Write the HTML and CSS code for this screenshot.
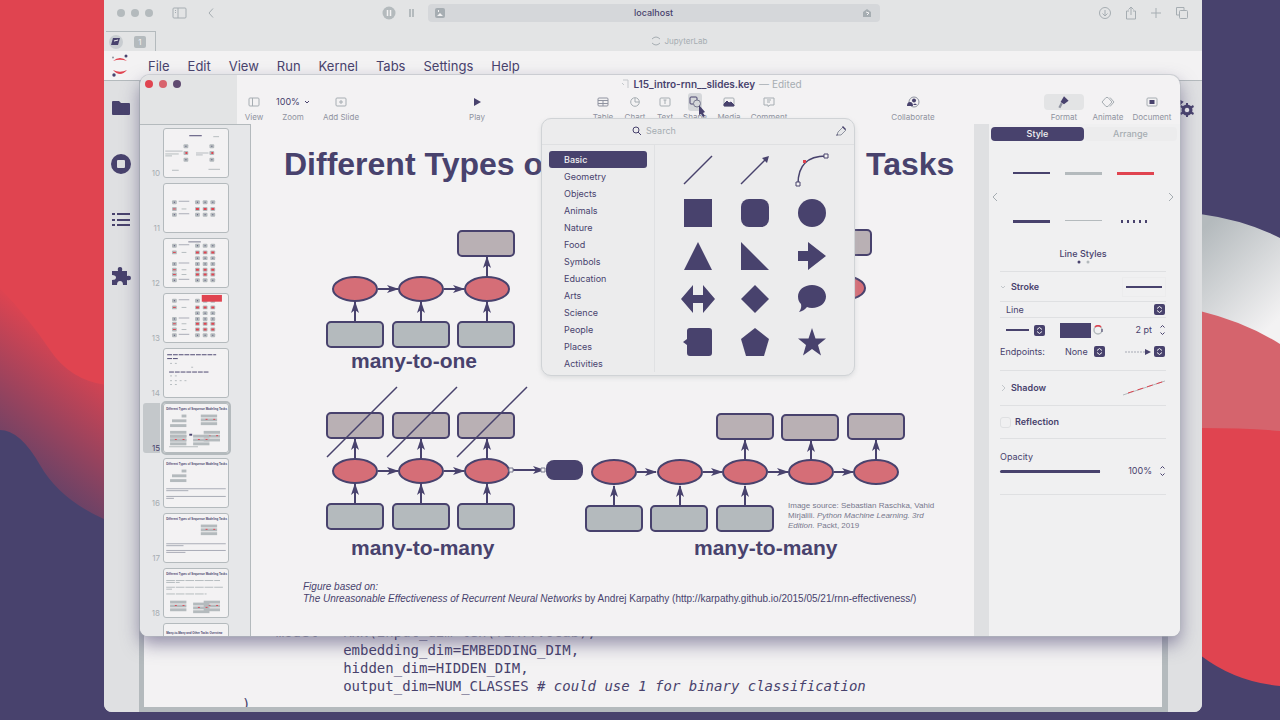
FILE: index.html
```html
<!DOCTYPE html>
<html lang="en">
<head>
<meta charset="utf-8">
<title>L15_intro-rnn__slides.key</title>
<link rel="stylesheet" href="styles.css">
</head>
<body>
<svg class="wallpaper" viewBox="0 0 1280 720" preserveAspectRatio="none" aria-hidden="true">
  <defs>
    <linearGradient id="fade" x1="0.35" y1="0" x2="0" y2="1"><stop offset="0.1" stop-color="#e04450"/><stop offset="0.9" stop-color="#48426d"/></linearGradient>
    <linearGradient id="silver" x1="0" y1="0" x2="0.6" y2="1"><stop offset="0.1" stop-color="#b4babd"/><stop offset="1" stop-color="#f3f2f3"/></linearGradient>
  </defs>
  <rect width="1280" height="720" fill="#48426d"/>
  <path d="M0 0H106V400Q70 390 46 350T0 290Z" fill="#e04450"/>
  <path d="M0 288Q30 320 50 350T106 385V520Q60 500 40 465T0 430Z" fill="url(#fade)"/>
  <path d="M1200 214Q1245 220 1280 238V350H1200Z" fill="url(#silver)"/>
  <path d="M1200 311Q1245 322 1280 344V440H1200Z" fill="#d5646d"/>
  <path d="M1200 428Q1245 428 1280 431V686Q1235 682 1200 655Z" fill="#e04450"/>
</svg>

<div class="browser">
  <div class="browser-bar">
    <div class="group nav">
      <span class="dots"><i></i><i></i><i></i></span>
      <svg width="16" height="12" viewBox="0 0 16 12" class="ln"><rect x="1" y="1" width="13" height="10" rx="1"/><path d="M6 1V11M3 3.500H4M3 5.500H4"/></svg>
      <svg width="8" height="12" viewBox="0 0 8 12" class="ln"><path d="M6 1.500L2 6L6 10.500"/></svg>
    </div>
    <div class="group address">
      <svg width="14" height="14" viewBox="0 0 14 14"><circle cx="7" cy="7" r="6.500" fill="#b4babd"/><path d="M5.500 4V10M8.500 4V10" stroke="#f3f2f3" stroke-width="1.500"/></svg>
      <svg width="8" height="10" viewBox="0 0 8 10"><path d="M2 1V9M5 1V9" stroke="#b4babd" stroke-width="2"/></svg>
      <div class="url">
        <svg width="10" height="10" viewBox="0 0 10 10"><rect width="10" height="10" rx="2" fill="#a6adb2"/><path d="M2 8L5 5L8 8ZM3 2H4V4H3Z" fill="#f3f2f3"/></svg>
        <span>localhost</span>
        <svg width="10" height="10" viewBox="0 0 10 10"><path d="M1 9V4L5 1L9 4V9Z" fill="#a6adb2"/><path d="M4 4L7 5L5 7" stroke="#f3f2f3" fill="none"/></svg>
      </div>
    </div>
    <div class="group tools">
      <svg width="14" height="14" viewBox="0 0 14 14" class="ln"><circle cx="7" cy="7" r="5.500"/><path d="M7 4V10M4.500 7.500L7 10L9.500 7.500"/></svg>
      <svg width="12" height="14" viewBox="0 0 12 14" class="ln"><path d="M4 5H1.500V13H10.500V5H8M6 9V1M3.500 3.500L6 1L8.500 3.500"/></svg>
      <svg width="12" height="12" viewBox="0 0 12 12" class="ln"><path d="M6 1V11M1 6H11"/></svg>
      <svg width="14" height="14" viewBox="0 0 14 14" class="ln"><path d="M4 9H1.500V1.500H9V4"/><rect x="4.500" y="4.500" width="8" height="8" rx="1"/></svg>
    </div>
  </div>
  <div class="tab-row">
    <div class="pinned">
      <svg width="18" height="16" viewBox="0 0 18 16"><circle cx="8" cy="8" r="7" fill="#c8ccd0"/><path d="M5 4H12L10 11H3Z" fill="#48426d"/><path d="M6 7L10 6" stroke="#f3f2f3"/></svg>
      <span>1</span>
    </div>
    <div class="tab">
      <svg width="10" height="10" viewBox="0 0 10 10" class="ln"><path d="M1 3Q5 -1 9 3M1 7Q5 11 9 7"/></svg>
      JupyterLab
    </div>
  </div>
  <nav class="menubar">
    <svg width="20" height="24" viewBox="0 0 20 24"><path d="M3 7Q10 1 17 7Q10 4.500 3 7ZM3 16Q10 24 17 16Q10 19.500 3 16Z" fill="#e04450"/><circle cx="16" cy="2" r="1.500" fill="#48426d"/><circle cx="3" cy="3.500" r="1" fill="#8f93a0"/><circle cx="4" cy="21" r="1.700" fill="#48426d"/></svg>
    <a href="#file">File</a><a href="#edit">Edit</a><a href="#view">View</a><a href="#run">Run</a><a href="#kernel">Kernel</a><a href="#tabs">Tabs</a><a href="#settings">Settings</a><a href="#help">Help</a>
  </nav>
  <div class="lab">
    <div class="lab-side">
      <svg width="20" height="20" viewBox="0 0 20 20"><path d="M1 4Q1 3 2 3H8L10 5H18Q19 5 19 6V16Q19 17 18 17H2Q1 17 1 16Z"/></svg>
      <svg width="20" height="20" viewBox="0 0 20 20"><path fill-rule="evenodd" d="M10 0A10 10 0 1 0 10 20A10 10 0 1 0 10 0ZM7 6H13Q14 6 14 7V13Q14 14 13 14H7Q6 14 6 13V7Q6 6 7 6Z"/></svg>
      <svg width="18" height="20" viewBox="0 0 18 20"><path d="M0 3H3V5H0ZM5 3H18V5H5ZM0 9H3V11H0ZM5 9H18V11H5ZM0 14H3V16H0ZM5 14H18V16H5Z"/></svg>
      <svg width="20" height="20" viewBox="0 0 20 20"><path d="M1 5H7Q6 1 9 1T11 5H16V10Q20 9 20 12T16 14V19H12Q12 15 9 15T6 19H1V14Q5 14 5 11.500T1 9Z"/></svg>
    </div>
    <pre class="code">    model = RNN(input_dim=len(TEXT.vocab),
            embedding_dim=EMBEDDING_DIM,
            hidden_dim=HIDDEN_DIM,
            output_dim=NUM_CLASSES <em># could use 1 for binary classification</em>
)</pre>
    <div class="lab-side right">
      <svg width="18" height="20" viewBox="0 0 18 20"><circle cx="10" cy="12" r="4" fill="none" stroke="#48426d" stroke-width="3"/><path d="M9 5H11V19H9ZM3 9L4 7L17 15L16 17ZM3 15L4 17L17 9L16 7Z"/><circle cx="10" cy="12" r="2.200" fill="#f3f2f3"/><path d="M1 2L5 4L2 7" fill="none" stroke="#48426d" stroke-width="2"/></svg>
    </div>
  </div>
</div>

<main class="keynote">
  <header class="kn-head">
    <div class="lights"><i></i><i></i><i></i></div>
    <div class="kn-top">
      <div class="kn-title"><svg width="8" height="10" viewBox="0 0 8 10" class="ln faint"><path d="M2 1H7V9M1 4L3 6"/></svg><b>L15_intro-rnn__slides.key</b><span>— Edited</span></div>
      <div class="toolbar">
        <div class="set">
          <button class="w34"><svg width="12" height="10" viewBox="0 0 12 10" class="ln"><rect x="1" y="1" width="10" height="8" rx="1"/><path d="M4.500 1V9"/></svg>View</button>
          <button class="w44"><span class="zoom">100% <svg width="6" height="4" viewBox="0 0 6 4"><path d="M1 1L3 3L5 1" fill="none" stroke="#48426d"/></svg></span>Zoom</button>
          <button class="w52"><svg width="12" height="10" viewBox="0 0 12 10" class="ln"><rect x="1" y="1" width="10" height="8" rx="1"/><path d="M6 3V7M4 5H8"/></svg>Add Slide</button>
        </div>
        <div class="set"><button class="w36"><svg width="8" height="10" viewBox="1 0 8 10"><path d="M2 1L9 5L2 9Z" fill="#48426d"/></svg>Play</button></div>
        <div class="set">
          <button class="w32"><svg width="12" height="10" viewBox="0 0 12 10" class="ln dk"><rect x="1" y="1" width="10" height="8" rx="1"/><path d="M1 3.500H11M1 6.500H11M6 3V9"/></svg>Table</button>
          <button class="w32"><svg width="12" height="10" viewBox="0 0 12 10" class="ln"><circle cx="6" cy="5" r="4.300"/><path d="M6 1V5H10"/></svg>Chart</button>
          <button class="w28"><svg width="12" height="10" viewBox="0 0 12 10" class="ln"><rect x="1" y="1" width="10" height="8" rx="1"/><path d="M4.500 3H7.500M6 3V7"/></svg>Text</button>
          <button class="w32 lit"><svg width="14" height="12" viewBox="0 0 14 12"><rect x="2" y="1" width="7" height="7" rx="1" fill="none" stroke="#48426d"/><circle cx="9" cy="7.500" r="3.500" fill="#d5d7da" stroke="#77788d"/></svg>Shape</button>
          <button class="w36"><svg width="12" height="10" viewBox="0 0 12 10" class="ln"><rect x="1" y="1" width="10" height="8" rx="1"/><path d="M1 9V7L4 4L6 6L8 5L11 8V9Z" fill="#48426d" stroke="#48426d"/></svg>Media</button>
          <button class="w44"><svg width="12" height="10" viewBox="0 0 12 10" class="ln"><path d="M1 1H11V8H7L5 9.500V8H1ZM4 3H8M4 5H7"/></svg>Comment</button>
        </div>
        <div class="set"><button class="w60"><svg width="14" height="12" viewBox="0 0 14 12"><circle cx="8" cy="6" r="5" fill="none" stroke="#8f93a0"/><circle cx="8" cy="4.500" r="2" fill="#48426d"/><path d="M1 10Q1 6 4 6T7 10ZM7 9Q9 6 11 9Z" fill="#48426d"/></svg>Collaborate</button></div>
        <div class="set">
          <button class="w44 on"><svg width="12" height="12" viewBox="-1 -1 14 14"><path d="M6 1L10 5L6 8L3 6Z" fill="#48426d"/><path d="M4 7L2 11" stroke="#8f93a0" stroke-width="2"/></svg>Format</button>
          <button class="w44"><svg width="14" height="12" viewBox="0 0 14 12" class="ln"><path d="M5 1.500H7L11 6L7 10.500H5L1 6ZM9 1.500L13 6L9 10.500"/></svg>Animate</button>
          <button class="w44"><svg width="12" height="10" viewBox="0 0 12 10" class="ln"><rect x="1" y="1" width="10" height="8" rx="1"/><rect x="4" y="3.500" width="4" height="3" fill="#48426d" stroke="#48426d"/></svg>Document</button>
        </div>
      </div>
    </div>
  </header>

  <div class="kn-body">
    <svg width="0" height="0" class="defs" aria-hidden="true">
      <defs>
        <g id="g3"><rect width="5" height="4" rx="1" fill="#b4babd"/><rect x="8" width="5" height="4" rx="1" fill="#b4babd"/><rect x="16" width="5" height="4" rx="1" fill="#b4babd"/><path d="M2 2H3M10 2H11M18 2H19" stroke="#48426d"/></g>
        <g id="r3"><rect width="5" height="4" rx="1" fill="#b4babd"/><rect x="8" width="5" height="4" rx="1" fill="#b4babd"/><rect x="16" width="5" height="4" rx="1" fill="#b4babd"/><path d="M1 2H4M9 2H12M17 2H20" stroke="#e04450" stroke-width="2"/></g>
        <g id="gl"><rect width="5" height="4" rx="1" fill="#b4babd"/><path d="M7 1H18" stroke="#a6a9b4"/><path d="M2 2H3" stroke="#48426d"/></g>
        <g id="rl"><rect width="5" height="4" rx="1" fill="#b4babd"/><path d="M10 2H15" stroke="#b4babd"/><path d="M1 2H4" stroke="#e04450"/></g>
        <g id="many"><rect width="17" height="3" y="10"/><rect x="2" y="5" width="15" height="3"/><rect x="12" width="5" height="3"/></g>
        <g id="full"><rect width="17" height="3"/><rect y="4" width="17" height="3"/><rect y="8" width="17" height="3"/><path d="M5 5H7M13 5H15" stroke="#e04450"/></g>
      </defs>
    </svg>
    <ol class="slides" start="10">
      <li><span>10</span><svg viewBox="0 0 66 50"><path d="M26 7H39" stroke="#48426d"/><path d="M51 8H57M8 43H15M46 42H58" stroke="#b4babd"/><path d="M1 23H19M1 26H15M1 28H8M33 25H46M33 27H40" stroke="#b4babd"/><g fill="#b4babd"><rect x="20" y="16" width="5" height="4" rx="1"/><rect x="20" y="23" width="5" height="4" rx="1"/><rect x="20" y="30" width="5" height="4" rx="1"/><rect x="47" y="16" width="5" height="4" rx="1"/><rect x="47" y="23" width="5" height="4" rx="1"/><rect x="47" y="30" width="5" height="4" rx="1"/></g><path d="M22 25H24M49 25H51" stroke="#e04450" stroke-width="2"/><path d="M22 18H23M22 32H23M49 18H50M49 32H50" stroke="#48426d"/></svg></li>
      <li><span>11</span><svg viewBox="0 0 66 50"><use href="#gl" x="8" y="17"/><use href="#g3" x="32" y="17"/><use href="#rl" x="8" y="24"/><use href="#r3" x="32" y="24"/><use href="#gl" x="8" y="30"/><use href="#g3" x="32" y="30"/></svg></li>
      <li><span>12</span><svg viewBox="0 0 66 50"><path d="M25 3H38" stroke="#77788d"/><use href="#gl" x="8" y="5"/><use href="#g3" x="32" y="5"/><use href="#rl" x="8" y="12"/><use href="#r3" x="32" y="12"/><use href="#g3" x="32" y="18"/><use href="#gl" x="8" y="24"/><use href="#g3" x="32" y="24"/><use href="#rl" x="8" y="30"/><use href="#r3" x="32" y="30"/><use href="#rl" x="8" y="35"/><use href="#r3" x="32" y="35"/><use href="#gl" x="8" y="41"/><use href="#g3" x="32" y="41"/></svg></li>
      <li><span>13</span><svg viewBox="0 0 66 50"><use href="#gl" x="8" y="5"/><use href="#g3" x="32" y="5"/><rect x="39" y="1" width="21" height="7" fill="#e04450"/><use href="#rl" x="8" y="12"/><use href="#r3" x="32" y="12"/><use href="#g3" x="32" y="18"/><use href="#gl" x="8" y="24"/><use href="#g3" x="32" y="24"/><use href="#rl" x="8" y="29"/><use href="#r3" x="32" y="29"/><use href="#rl" x="8" y="35"/><use href="#r3" x="32" y="35"/><use href="#gl" x="8" y="41"/><use href="#g3" x="32" y="41"/></svg></li>
      <li><span>14</span><svg viewBox="0 0 66 50"><path d="M3 6H54M3 10H15M5 24H46" stroke="#48426d" stroke-dasharray="5 1"/><path d="M6 15H16M28 19H32M6 28H16M6 33H24M6 37H16" stroke="#b4babd" stroke-dasharray="2 3"/></svg></li>
      <li class="current"><span>15</span><svg viewBox="0 0 66 50"><text x="2" y="6">Different Types of Sequence Modeling Tasks</text><g fill="#b4babd"><use href="#many" x="6" y="11"/><use href="#full" x="38" y="11"/><use href="#full" x="6" y="28"/><use href="#full" x="6" y="32"/><use href="#full" x="41" y="28"/><use href="#full" x="30" y="32"/><path d="M5 44H35V45H5Z"/></g><rect x="26" y="31" width="3" height="2" fill="#48426d"/></svg></li>
      <li><span>16</span><svg viewBox="0 0 66 50"><text x="2" y="6">Different Types of Sequence Modeling Tasks</text><g fill="#b4babd"><use href="#many" x="6" y="11"/></g><path d="M2 31H64M2 33H25M2 39H64M2 41H10" stroke="#a6a9b4"/></svg></li>
      <li><span>17</span><svg viewBox="0 0 66 50"><text x="2" y="6">Different Types of Sequence Modeling Tasks</text><g fill="#b4babd"><use href="#full" x="38" y="11"/></g><path d="M2 31H64M2 33H20M2 38H64M2 40H22" stroke="#a6a9b4"/></svg></li>
      <li><span>18</span><svg viewBox="0 0 66 50"><text x="2" y="6">Different Types of Sequence Modeling Tasks</text><path d="M2 12H58M2 14H16M2 19H62M2 21H8M2 26H44" stroke="#b4babd" stroke-dasharray="9 1"/><g fill="#b4babd"><use href="#full" x="6" y="33"/><use href="#full" x="41" y="33"/><use href="#full" x="30" y="35"/></g></svg></li>
      <li><span></span><svg viewBox="0 0 66 50"><text x="2" y="10">Many-to-Many and Other Tasks Overview</text></svg></li>
    </ol>

    <section class="canvas">
      <svg viewBox="251 124 723 512" preserveAspectRatio="xMinYMin meet">
        <defs>
          <marker id="tip" viewBox="0 0 12 10" refX="11" refY="5" markerWidth="12" markerHeight="10" markerUnits="userSpaceOnUse" orient="auto"><path d="M0 1L12 5L0 9L3 5Z" fill="#48426d"/></marker>
          <rect id="cell" width="56" height="25" rx="4" fill="#b4babd" stroke="#48426d" stroke-width="2"/>
          <rect id="warm" width="56" height="25" rx="4" fill="#b9b0b4" stroke="#48426d" stroke-width="2"/>
          <ellipse id="node" rx="22" ry="12" fill="#d56e77" stroke="#48426d" stroke-width="2"/>
        </defs>
        <text class="h" x="284" y="175">Different Types of Sequence <tspan x="866">Tasks</tspan></text>
        <use href="#warm" x="458" y="231"/><use href="#node" x="355" y="289"/><use href="#node" x="421" y="289"/><use href="#node" x="487" y="289"/>
        <use href="#cell" x="327" y="322"/><use href="#cell" x="393" y="322"/><use href="#cell" x="458" y="322"/>
        <use href="#warm" x="815" y="230"/><use href="#node" x="843" y="288"/>
        <use href="#warm" x="327" y="413"/><use href="#warm" x="393" y="413"/><use href="#warm" x="458" y="413"/>
        <use href="#node" x="355" y="471"/><use href="#node" x="421" y="471"/><use href="#node" x="487" y="471"/>
        <use href="#cell" x="327" y="504"/><use href="#cell" x="393" y="504"/><use href="#cell" x="458" y="504"/>
        <use href="#warm" x="717" y="414"/><use href="#warm" x="782" y="415"/><use href="#warm" x="848" y="414"/>
        <use href="#node" x="614" y="472"/><use href="#node" x="680" y="472"/><use href="#node" x="745" y="472"/><use href="#node" x="811" y="472"/><use href="#node" x="876" y="472"/>
        <use href="#cell" x="586" y="506"/><use href="#cell" x="651" y="506"/><use href="#cell" x="717" y="506"/>
        <g class="links">
          <path d="M378 289H398"/><path d="M444 289H464"/>
          <path d="M355 321V302"/><path d="M421 321V302"/><path d="M487 321V302"/><path d="M487 276V257"/>
          <path d="M378 471H398"/><path d="M444 471H464"/>
          <path d="M355 503V484"/><path d="M421 503V484"/><path d="M487 503V484"/><path d="M355 458V439"/><path d="M421 458V439"/><path d="M487 458V439"/>
          <path d="M637 472H656"/><path d="M703 472H722"/><path d="M768 472H788"/><path d="M834 472H853"/>
          <path d="M614 505V486"/><path d="M680 505V486"/><path d="M745 505V486"/><path d="M745 459V440"/><path d="M811 459V441"/><path d="M876 459V440"/>
          <path d="M511 470H544"/>
        </g>
        <path d="M327 457L397 387M387 457L457 387M457 457L527 387" stroke="#48426d" stroke-width="1.500"/>
        <rect x="546" y="460" width="37" height="20" rx="8" fill="#48426d"/>
        <path d="M509 468H513V472H509ZM541 468H545V472H541Z" fill="#f3f2f3" stroke="#77788d"/>
        <text class="l" x="351" y="368">many-to-one</text><text class="l" x="351" y="555">many-to-many</text><text class="l" x="694" y="555">many-to-many</text>
        <text class="n" x="788" y="508">Image source: Sebastian Raschka, Vahid</text>
        <text class="n" x="788" y="518">Mirjalili. <tspan class="i">Python Machine Learning. 3rd</tspan></text>
        <text class="n" x="788" y="528"><tspan class="i">Edition.</tspan> Packt, 2019</text>
        <text class="f i" x="303" y="590">Figure based on:</text>
        <text class="f" x="303" y="602"><tspan class="i">The Unreasonable Effectiveness of Recurrent Neural Networks</tspan> by Andrej Karpathy (http://karpathy.github.io/2015/05/21/rnn-effectiveness/)</text>
      </svg>
    </section>

    <aside class="inspector">
      <div class="tabs"><button class="active">Style</button><button>Arrange</button></div>
      <div class="styles">
        <svg width="6" height="10" viewBox="0 0 6 10" class="ln"><path d="M5 1L1 5L5 9"/></svg>
        <div class="swatches"><i class="s1"></i><i class="s2"></i><i class="s3"></i><i class="s4"></i><i class="s5"></i><i class="s6"></i></div>
        <svg width="6" height="10" viewBox="0 0 6 10" class="ln"><path d="M1 1L5 5L1 9"/></svg>
      </div>
      <div class="caption">Line Styles<svg width="16" height="5" viewBox="0 0 16 5"><circle cx="4" cy="2" r="1.500" fill="#48426d"/><circle cx="13" cy="2" r="1.500" fill="#b4babd"/></svg></div>
      <div class="row stroke"><svg width="7" height="6" viewBox="0 0 7 6" class="ln faint"><path d="M1 2L3 4L5 2"/></svg><b>Stroke</b><span class="well"><i class="bar"></i></span></div>
      <label class="row line"><select aria-label="Stroke type"><option>Line</option></select><svg width="11" height="11" viewBox="0 0 11 11"><rect width="11" height="11" rx="2" fill="#48426d"/><path d="M3 4.500L5.500 2.500L8 4.500M3 6.500L5.500 8.500L8 6.500" fill="none" stroke="#f3f2f3"/></svg></label>
      <div class="row ctl">
        <button class="dash" aria-label="Line dash"><i></i><svg width="11" height="11" viewBox="0 0 11 11"><rect width="11" height="11" rx="2" fill="#48426d"/><path d="M3 4.500L5.500 2.500L8 4.500M3 6.500L5.500 8.500L8 6.500" fill="none" stroke="#f3f2f3"/></svg></button>
        <button class="colour" aria-label="Stroke colour"><i></i><svg width="10" height="10" viewBox="0 0 10 10" fill="none"><circle cx="5" cy="5" r="4" stroke="#b4babd" stroke-width="1.500"/><path d="M2 2A4 4 0 0 1 8 2" stroke="#e04450" stroke-width="1.500"/><path d="M9 4V7" stroke="#48426d"/></svg></button>
        <span class="num"><input value="2 pt" aria-label="Stroke width"><svg width="7" height="12" viewBox="0 0 7 12"><path d="M1.500 3.500L3.500 1.500L5.500 3.500M1.500 8.500L3.500 10.500L5.500 8.500" fill="none" stroke="#48426d"/></svg></span>
      </div>
      <div class="row ends">
        <label for="ends">Endpoints:</label>
        <span class="pick"><select id="ends"><option>None</option></select><svg width="11" height="11" viewBox="0 0 11 11"><rect width="11" height="11" rx="2" fill="#48426d"/><path d="M3 4.500L5.500 2.500L8 4.500M3 6.500L5.500 8.500L8 6.500" fill="none" stroke="#f3f2f3"/></svg></span>
        <button class="arrow" aria-label="End arrow"><svg width="26" height="6" viewBox="0 0 26 6"><path d="M0 3H20" stroke="#a6a9b4" stroke-dasharray="2 1"/><path d="M20 0L26 3L20 6Z" fill="#48426d"/></svg><svg width="11" height="11" viewBox="0 0 11 11"><rect width="11" height="11" rx="2" fill="#48426d"/><path d="M3 4.500L5.500 2.500L8 4.500M3 6.500L5.500 8.500L8 6.500" fill="none" stroke="#f3f2f3"/></svg></button>
      </div>
      <div class="row shadow"><svg width="7" height="8" viewBox="0 0 7 8" class="ln faint"><path d="M2 1L5 4L2 7"/></svg><b>Shadow</b><svg class="end" width="44" height="18" viewBox="0 0 44 18"><path d="M1 16L43 2" stroke="#b4babd"/><path d="M6 14L43 2" stroke="#e04450" stroke-dasharray="6 4"/></svg></div>
      <label class="row reflect"><input type="checkbox"><b>Reflection</b></label>
      <div class="row opacity"><label for="op">Opacity</label><div><input id="op" type="range" value="100"><span class="num"><input value="100%" aria-label="Opacity value"><svg width="7" height="12" viewBox="0 0 7 12"><path d="M1.500 3.500L3.500 1.500L5.500 3.500M1.500 8.500L3.500 10.500L5.500 8.500" fill="none" stroke="#48426d"/></svg></span></div></div>
    </aside>
  </div>
</main>

<div class="popover">
  <div class="search"><label><svg width="10" height="10" viewBox="0 0 10 10" fill="none" stroke="#48426d"><circle cx="4" cy="4" r="3"/><path d="M6 6L9 9"/></svg><input placeholder="Search" aria-label="Search shapes"></label>
    <svg width="12" height="12" viewBox="0 0 12 12"><path d="M2 10L3 7L8 2L11 5L6 10Z" fill="#e6e7e9" stroke="#8f93a0"/><path d="M7 2L8 1L11 4L10 5ZM1 11L2 9L3 10Z" fill="#48426d"/></svg></div>
  <div class="pop-body">
    <ul class="cats"><li class="active">Basic</li><li>Geometry</li><li>Objects</li><li>Animals</li><li>Nature</li><li>Food</li><li>Symbols</li><li>Education</li><li>Arts</li><li>Science</li><li>People</li><li>Places</li><li>Activities</li></ul>
    <div class="shapes">
      <svg viewBox="0 0 34 34"><path d="M3 31L31 3" class="st"/></svg>
      <svg viewBox="0 0 34 34"><path d="M3 31L27 7" class="st"/><path d="M31 3L29 10L24 5Z"/></svg>
      <svg viewBox="0 0 34 34"><path d="M3 31Q3 3 31 3" class="st"/><path d="M1 29H5V33H1ZM29 1H33V5H29Z" class="hd"/><path d="M8 7H11V10H8Z" class="hd r"/></svg>
      <svg viewBox="0 0 34 34"><rect x="3" y="3" width="28" height="28"/></svg>
      <svg viewBox="0 0 34 34"><rect x="3" y="3" width="28" height="28" rx="8"/></svg>
      <svg viewBox="0 0 34 34"><circle cx="17" cy="17" r="14"/></svg>
      <svg viewBox="0 0 34 34"><path d="M17 3L31 31H3Z"/></svg>
      <svg viewBox="0 0 34 34"><path d="M3 3L31 31H3Z"/></svg>
      <svg viewBox="0 0 34 34"><path d="M3 12H13V3L31 17L13 31V22H3Z"/></svg>
      <svg viewBox="0 0 34 34"><path d="M0 17L12 3V13H22V3L34 17L22 31V21H12V31Z"/></svg>
      <svg viewBox="0 0 34 34"><path d="M17 3L31 17L17 31L3 17Z"/></svg>
      <svg viewBox="0 0 34 34"><path d="M17 3C25 3 31 8 31 14.500S25 26 17 26Q14 26 12 25Q9 29 4 30Q7 26 6 22Q3 19 3 14.500C3 8 9 3 17 3Z"/></svg>
      <svg viewBox="0 0 34 34"><path d="M9 3H28Q31 3 31 6V28Q31 31 28 31H9Q6 31 6 28V20L2 17L6 14V6Q6 3 9 3Z"/></svg>
      <svg viewBox="0 0 34 34"><path d="M17 3L31 14L26 31H8L3 14Z"/></svg>
      <svg viewBox="0 0 34 34"><path d="M17 3L20.500 13.500H31L23 20L26 30.500L17 24L8 30.500L11 20L3 13.500H13.500Z"/></svg>
    </div>
  </div>
</div>
<svg class="cursor" width="8" height="12" viewBox="0 0 8 12"><path d="M1 0L7 7L5 8L7 11L5 12L3 9L1 10Z" fill="#48426d"/></svg>
</body>
</html>
```
FILE: styles.css
```css
* { box-sizing: border-box; }
:root { --paper: #f3f2f3; --ink: #48426d; --grey: #b4babd; --red: #e04450; --mist: #e3e4e5; --ui: Inter, "Liberation Sans", sans-serif; }
body { margin: 0; height: 100vh; overflow: hidden; position: relative; color: var(--ink); font: 10px/12px var(--ui); }
button, input, select { font: inherit; color: inherit; border: 0; padding: 0; margin: 0; background: none; appearance: none; outline: 0; }
svg { flex: none; }
b { font-weight: 600; }
.ln { fill: none; stroke: #a6adb2; stroke-width: 1; }
.faint { opacity: .6; }
.dk { stroke: #8f93a0; }
.wallpaper { position: absolute; inset: 0; width: 100%; height: 100%; }

.browser { position: absolute; inset: 0 78px 8px 104px; display: flex; flex-direction: column; background: var(--mist); border-radius: 0 0 8px 8px; overflow: hidden; }
.browser-bar { display: grid; grid-template-columns: 278px 1fr 322px; height: 25px; align-items: center; }
.group { display: flex; align-items: center; }
.nav { padding-left: 13px; gap: 19px; }
.dots { display: flex; gap: 6px; }
.dots i { width: 8px; height: 8px; border-radius: 50%; background: var(--grey); }
.address { gap: 12px; }
.url { flex: 1; display: flex; align-items: center; justify-content: space-between; height: 18px; padding: 0 8px 0 7px; background: #d5d7da; border-radius: 4px; font: 500 9px/12px var(--ui); }
.tools { justify-content: flex-end; gap: 13px; padding-right: 13px; }
.tab-row { display: grid; grid-template-columns: 52px 1fr; height: 26px; }
.pinned { display: flex; align-items: center; gap: 8px; margin: 6px 0 0 2px; padding-left: 2px; border: 1px solid var(--grey); border-width: 1px 1px 0 0; }
.pinned span { width: 12px; height: 12px; border-radius: 2px; background: var(--grey); color: var(--paper); text-align: center; font-size: 8px; }
.tab { display: flex; align-items: center; justify-content: center; gap: 4px; padding: 6px 0 0 0; color: #a6adb2; font-size: 8px; }
.menubar { display: flex; align-items: center; gap: 18px; height: 29px; padding-left: 6px; background: var(--paper); font: 13px/18px var(--ui); }
.menubar a { color: inherit; text-decoration: none; }
.lab { flex: 1; display: flex; border-top: 1px solid var(--grey); min-height: 0; }
.lab-side { width: 35px; display: flex; flex-direction: column; align-items: center; gap: 36px; padding: 17px 2px 0 0; background: #dfe0e2; fill: var(--ink); }
.lab-side.right { width: 34px; padding: 17px 0 0 2px; align-items: center; }
.code { flex: 1; margin: 0; display: flow-root; padding: 542px 0 0 98px; background: var(--paper); border: solid var(--grey); border-width: 0 6px 5px 5px; font: 14px/18px "DejaVu Sans Mono", monospace; overflow: hidden; }

.keynote { position: absolute; inset: 75px 100px 84px 140px; display: flex; flex-direction: column; background: var(--paper); border-radius: 10px 10px 8px 8px; overflow: hidden; box-shadow: 0 0 0 1px #b4babd80, 0 8px 18px #48426d90; }
.kn-head { display: flex; height: 49px; flex: none; }
.lights { width: 97px; display: flex; gap: 6px; padding: 5px 0 0 5px; background: var(--mist); }
.lights i { width: 8px; height: 8px; border-radius: 50%; background: var(--red); }
.lights i:nth-child(2) { background: #d8636d; }
.lights i:nth-child(3) { background: #5f4a70; }
.kn-top { flex: 1; }
.kn-title { display: flex; justify-content: center; gap: 4px; height: 18px; padding-left: 6px; align-items: center; color: #a6adb2; }
.kn-title b { color: var(--ink); }
.toolbar { display: flex; gap: 92px; padding-right: 6px; }
.toolbar .set:last-child { margin-left: auto; }
.set { display: flex; }
.set button { display: flex; flex-direction: column; align-items: center; gap: 1px; height: 31px; font-size: 8px; line-height: 10px; color: #8f93a0; white-space: nowrap; }
.set button > svg, .zoom { height: 18px; }
.zoom { display: flex; align-items: center; gap: 4px; color: var(--ink); font-size: 9px; }
.lit > svg { background: #d5d7da; border-radius: 3px; }
.on > svg { width: 40px; background: var(--mist); border-radius: 4px; }
.set .on > svg { height: 16px; margin: 1px 0; }
.w28 { width: 28px; } .w32 { width: 32px; } .w34 { width: 34px; } .w36 { width: 36px; } .w44 { width: 44px; } .w52 { width: 52px; } .w60 { width: 60px; }

.kn-body { flex: 1; display: flex; min-height: 0; }
.defs { position: absolute; }
.slides { width: 111px; margin: 0; padding: 3px 0 0 0; list-style: none; overflow: hidden; background: #e6e7e9; border: solid var(--grey); border-width: 1px 1px 0 0; }
.slides li { display: flex; align-items: flex-end; gap: 3px; height: 55px; padding: 0 21px 5px 0; }
.slides span { width: 20px; text-align: right; color: #a6adb2; font-size: 8px; line-height: 10px; }
.slides svg { flex: 1; height: 50px; background: var(--paper); border: 1px solid var(--grey); border-radius: 3px; }
.slides text { font: bold 3px "Liberation Sans", sans-serif; fill: var(--ink); }
.slides .current span { background: #c4c8cb; color: var(--ink); height: 50px; padding-top: 40px; margin-left: 3px; width: 17px; border-radius: 3px 0 0 3px; }
.slides .current svg { outline: 2px solid var(--grey); }
.canvas { flex: 1; min-width: 0; }
.canvas svg { display: block; width: 100%; height: auto; font-family: "Liberation Sans", sans-serif; fill: var(--ink); }
.links path { stroke: var(--ink); stroke-width: 2; marker-end: url(#tip); }
.h { font-size: 32px; font-weight: bold; }
.l { font-size: 21px; font-weight: bold; }
.n { font-size: 8px; fill: #77788d; }
.f { font-size: 10px; }
.i { font-style: italic; }

.inspector { width: 206px; padding: 3px 14px 0 11px; border-left: 15px solid #dfe0e2; background: #f0f0f1; font-size: 9px; }
.tabs { display: flex; margin: 0 -11px 0 -9px; }
.tabs button { flex: 1; height: 14px; border-radius: 4px; font-weight: 500; color: #a6adb2; background: #ececed; }
.tabs .active { background: var(--ink); color: var(--paper); }
.styles { display: flex; align-items: center; margin: 0 -8px; height: 107px; padding-top: 5px; justify-content: space-between; }
.swatches { display: grid; grid-template-columns: repeat(3, 37px); gap: 45px 15px; }
.swatches i { height: 3px; background: var(--ink); }
.swatches .s1 { height: 2px; } .swatches .s2 { background: var(--grey); } .swatches .s3 { background: var(--red); }
.swatches .s5 { height: 1px; background: var(--grey); } .swatches .s6 { background: repeating-linear-gradient(90deg, var(--ink) 0 2px, transparent 2px 6px); margin: 0 4px; }
.caption { display: flex; flex-direction: column; align-items: center; height: 24px; border-bottom: 1px solid #dfe0e2; font-weight: 500; }
.row { display: flex; align-items: center; border-bottom: 1px solid #dfe0e2; }
.stroke { height: 30px; gap: 4px; }
.well { margin-left: auto; padding: 8px 3px; border: 1px solid #ececed; }
.bar { display: block; width: 36px; height: 2px; background: var(--ink); }
.line { height: 16px; padding: 0 1px 0 6px; justify-content: space-between; }
.line select { flex: 1; }
.ctl { height: 24px; border: 0; justify-content: space-between; }
.dash { display: flex; align-items: center; gap: 5px; padding-left: 6px; }
.dash i { width: 23px; height: 2px; background: var(--ink); }
.colour { display: flex; align-items: center; gap: 2px; }
.colour i { width: 31px; height: 15px; background: var(--ink); }
.num { display: flex; align-items: center; gap: 7px; }
.num input { width: 34px; text-align: right; }
.ends { height: 29px; padding: 0 1px 9px 0; justify-content: space-between; }
.pick, .arrow { display: flex; align-items: center; gap: 3px; }
.pick select { width: 26px; }
.shadow { height: 35px; gap: 4px; }
.end { margin-left: auto; }
.reflect { height: 33px; gap: 4px; }
.reflect input { width: 11px; height: 11px; border: 1px solid #dfe0e2; border-radius: 3px; }
.opacity { flex-direction: column; align-items: stretch; height: 56px; padding-top: 12px; }
.opacity > div { display: flex; justify-content: space-between; margin-top: 2px; }
.opacity input[type=range] { width: 100px; height: 12px; }
.opacity input[type=range]::-webkit-slider-runnable-track { height: 3px; border-radius: 2px; background: var(--ink); }
.opacity input[type=range]::-webkit-slider-thumb { appearance: none; width: 3px; height: 3px; background: var(--ink); }

.popover { position: absolute; left: 541px; top: 118px; width: 314px; background: #ececed; border: 1px solid #d0d3d6; border-radius: 10px; padding-bottom: 3px; box-shadow: 0 2px 4px #b4babd60; }
.search { display: flex; align-items: center; height: 26px; padding: 0 7px 2px 90px; justify-content: space-between; border-bottom: 1px solid #dfe0e2; }
.search label { display: flex; gap: 4px; align-items: center; }
.search input { width: 120px; font-size: 9px; }
.search input::placeholder { color: #a6adb2; opacity: 1; }
.pop-body { display: flex; }
.cats { width: 113px; margin: 0; padding: 6px 7px 0 7px; list-style: none; font-size: 9px; line-height: 17px; border-right: 1px solid #e0e1e3; }
.cats li { padding-left: 15px; }
.cats .active { background: var(--ink); color: var(--paper); border-radius: 3px; font-weight: 500; }
.shapes { flex: 1; display: grid; grid-template-columns: repeat(3, 34px); gap: 9px 23px; padding: 8px 0 6px 26px; align-content: start; fill: var(--ink); }
.shapes svg { width: 34px; height: 34px; }
.st { fill: none; stroke: var(--ink); stroke-width: 1.5; }
.hd { fill: var(--paper); stroke: var(--ink); }
.hd.r { fill: var(--red); stroke: none; }
.cursor { position: absolute; left: 698px; top: 105px; }
```
